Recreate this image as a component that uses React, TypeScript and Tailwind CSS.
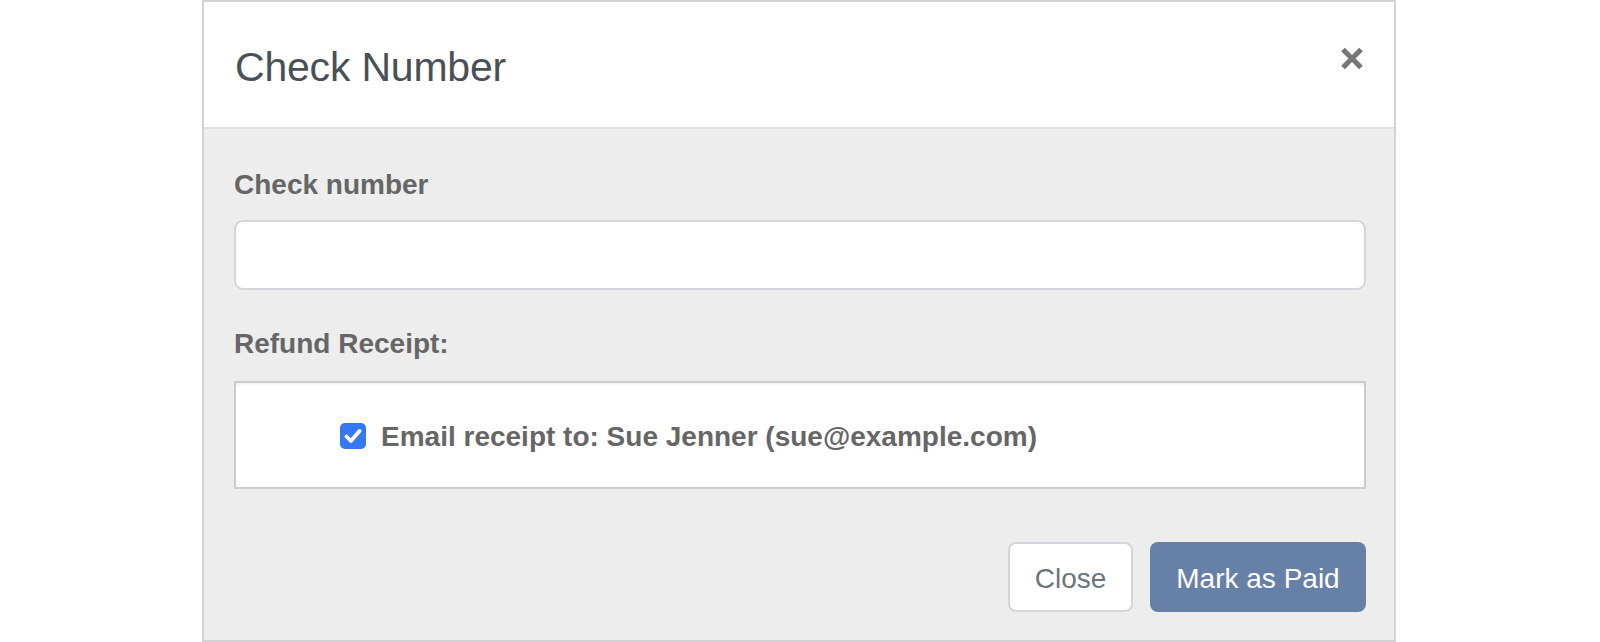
import React from "react";

export default function App() {
  return (
    <div className="w-[1600px] h-[642px] bg-white overflow-hidden" style={{ fontFamily: '"Liberation Sans", Arial, sans-serif' }}>
      <div className="ml-[202px] w-[1194px] h-[642px] border-2 border-[#d3d3d3] flex flex-col">
        {/* Header */}
        <div className="h-[127px] shrink-0 bg-white border-b-2 border-[#dee2e6] flex items-center justify-between pl-[31px] pr-[30px]">
          <h1 className="text-[41px] leading-[48px] font-light text-[#495057] tracking-[-0.2px] pt-[5px]">
            Check Number
          </h1>
          <button className="w-[24px] h-[24px] flex items-center justify-center mt-[-12px]" aria-label="Close">
            <svg width="24" height="23" viewBox="0 0 24 23">
              <path d="M3 2.5 L21 20.5 M21 2.5 L3 20.5" stroke="#777" strokeWidth="5.2" strokeLinecap="butt" />
            </svg>
          </button>
        </div>
        {/* Body */}
        <div className="flex-1 bg-[#ededed] pl-[30px] pr-[28px] pt-[35px]">
          <label className="block text-[28px] leading-[42px] font-bold text-[#666]">Check number</label>
          <input
            type="text"
            className="mt-[14px] block w-full h-[70px] bg-white border-2 border-[#d2d6db] rounded-[9px] outline-none"
          />
          <div className="mt-[33px] text-[28px] leading-[42px] font-bold text-[#666]">Refund Receipt:</div>
          <div className="mt-[16px] h-[108px] bg-white border-2 border-[#cccccc] shadow-[inset_0_2px_2px_rgba(0,0,0,0.05)] flex items-center pl-[104px]">
            <div className="w-[26px] h-[26px] rounded-[5px] bg-[#3478f6] flex items-center justify-center mt-[2px]">
              <svg width="18" height="16" viewBox="0 0 18 16">
                <path d="M2.5 8.5 L7 13 L15.5 3" stroke="white" strokeWidth="3.8" fill="none" strokeLinecap="round" strokeLinejoin="round" />
              </svg>
            </div>
            <span className="ml-[15px] text-[28px] leading-[42px] font-bold text-[#666] pt-[4px]">
              Email receipt to: Sue Jenner (sue@example.com)
            </span>
          </div>
          <div className="mt-[53px] flex justify-end gap-[17px]">
            <button className="w-[125px] h-[70px] bg-white border-2 border-[#d2d6db] rounded-[8px] text-[28px] text-[#6c757d] pt-[3px]">
              Close
            </button>
            <button className="w-[216px] h-[70px] bg-[#6780a8] rounded-[8px] text-[28px] text-white pt-[3px]">
              Mark as Paid
            </button>
          </div>
        </div>
      </div>
    </div>
  );
}
